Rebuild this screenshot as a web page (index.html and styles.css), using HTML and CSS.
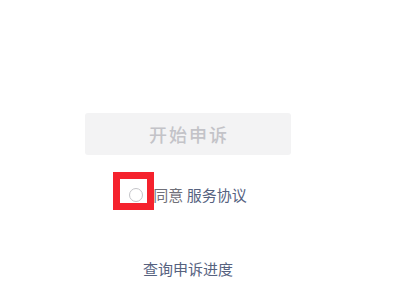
FILE: index.html
```html
<!DOCTYPE html>
<html lang="zh">
<head>
<meta charset="utf-8">
<link rel="stylesheet" href="styles.css">
</head>
<body>
<div class="page">
  <div class="col">
    <button class="start">开始申诉</button>
    <div class="agree">
      <span class="radio"><span class="mark"></span></span>
      <span class="agree-text">同意 <span class="link">服务协议</span></span>
    </div>
    <div class="query">查询申诉进度</div>
  </div>
</div>
</body>
</html>
```
FILE: styles.css
```css
html, body {
  margin: 0;
  padding: 0;
  background: #ffffff;
}
body {
  width: 400px;
  height: 300px;
  overflow: hidden;
  font-family: "Noto Sans CJK SC", "Noto Sans", sans-serif;
}
.page {
  padding-top: 113px;
  padding-left: 85px;
}
.col {
  width: 206px;
  display: flex;
  flex-direction: column;
  align-items: center;
}
.start {
  width: 206px;
  height: 42px;
  border: none;
  border-radius: 3px;
  background: #f3f3f4;
  color: #c3c3c8;
  font-family: inherit;
  font-size: 18px;
  font-weight: 500;
  letter-spacing: 2px;
  padding: 0 0 0 2px;
  line-height: 42px;
}
.agree {
  margin-top: 26px;
  height: 28px;
  display: flex;
  align-items: center;
  gap: 10px;
}
.radio {
  position: relative;
  width: 14px;
  height: 14px;
  box-sizing: border-box;
  border: 1px solid #c4c4c8;
  border-radius: 50%;
}
.mark {
  position: absolute;
  left: -17px;
  top: -17px;
  width: 41px;
  height: 38px;
  box-sizing: border-box;
  border: 7px solid #f5222d;
}
.agree-text {
  font-size: 15px;
  color: #707078;
  line-height: 28px;
}
.link {
  color: #56627f;
}
.query {
  margin-top: 49px;
  font-size: 15px;
  line-height: 22px;
  color: #56627f;
}
```
